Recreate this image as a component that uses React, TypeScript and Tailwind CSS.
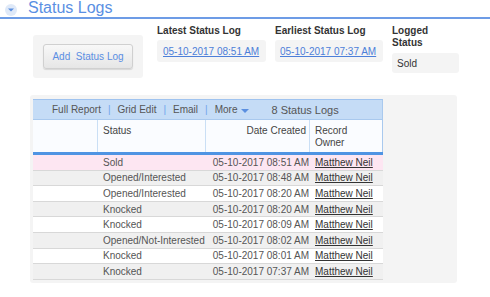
import React from "react";

const rows = [
  { status: "Sold", date: "05-10-2017 08:51 AM", bg: "bg-[#fde6f2]" },
  { status: "Opened/Interested", date: "05-10-2017 08:48 AM", bg: "bg-[#f0f0f0]" },
  { status: "Opened/Interested", date: "05-10-2017 08:20 AM", bg: "bg-white" },
  { status: "Knocked", date: "05-10-2017 08:20 AM", bg: "bg-[#f0f0f0]" },
  { status: "Knocked", date: "05-10-2017 08:09 AM", bg: "bg-white" },
  { status: "Opened/Not-Interested", date: "05-10-2017 08:02 AM", bg: "bg-[#f0f0f0]" },
  { status: "Knocked", date: "05-10-2017 08:01 AM", bg: "bg-white" },
  { status: "Knocked", date: "05-10-2017 07:37 AM", bg: "bg-[#f0f0f0]" },
];

function Sep() {
  return <span className="mx-[7px] text-[#6fa6ec]">|</span>;
}

export default function App() {
  return (
    <div
      className="w-[490px] h-[297px] bg-white overflow-hidden text-[10px] text-[#444]"
      style={{ fontFamily: '"Liberation Sans", Arial, sans-serif' }}
    >
      {/* Header */}
      <div className="flex items-start h-[19px] border-b-2 border-[#6d9ce6]">
        <div className="ml-[5px] mt-[4px] w-[12px] h-[12px] rounded-full bg-[#dfe9f8] flex items-center justify-center">
          <svg width="6" height="4" viewBox="0 0 6 4">
            <path d="M0 0.5 L6 0.5 L3 3.5 Z" fill="#5b8fe0" />
          </svg>
        </div>
        <div className="ml-[11px] mt-[0px] text-[16px] leading-[16px] text-[#5a8fe3] whitespace-nowrap">
          Status Logs
        </div>
      </div>

      {/* Info row */}
      <div className="flex items-start pl-[33px] h-[59px]">
        <div className="mt-[16px] w-[110px] h-[43px] bg-[#f4f4f4] rounded-[3px] flex items-center justify-center">
          <div className="w-[90px] h-[25px] rounded-[3px] border border-[#d0d0d0] bg-gradient-to-b from-[#f8f8f8] to-[#e6e6e6] shadow-[0_1px_1px_rgba(0,0,0,0.12)] flex items-center justify-center text-[#5b8ee3] text-[10px] whitespace-pre">
            Add  Status Log
          </div>
        </div>

        <div className="ml-[14px] mt-[5.5px] w-[109px]">
          <div className="font-bold text-[#333] leading-[12px] whitespace-nowrap">Latest Status Log</div>
          <div className="mt-[3.5px] h-[22px] bg-[#f4f4f4] rounded-[3px] flex items-center pl-[6px]">
            <span className="underline text-[#4d7fd9] whitespace-nowrap">05-10-2017 08:51 AM</span>
          </div>
        </div>

        <div className="ml-[9px] mt-[5.5px] w-[108px]">
          <div className="font-bold text-[#333] leading-[12px] whitespace-nowrap">Earliest Status Log</div>
          <div className="mt-[3.5px] h-[22px] bg-[#f4f4f4] rounded-[3px] flex items-center pl-[5px]">
            <span className="underline text-[#4d7fd9] whitespace-nowrap">05-10-2017 07:37 AM</span>
          </div>
        </div>

        <div className="ml-[9px] mt-[5.5px] w-[67px]">
          <div className="font-bold text-[#333] leading-[12px]">
            Logged
            <br />
            Status
          </div>
          <div className="mt-[4.5px] h-[20px] bg-[#f4f4f4] rounded-[3px] flex items-center pl-[5px] text-[#333]">
            Sold
          </div>
        </div>
      </div>

      {/* Table panel */}
      <div className="ml-[30px] mt-[17px] w-[427px] h-[188px] bg-[#f4f4f4] rounded-[3px] pt-[4px] pl-[3px]">
        <div className="w-[350px]">
          {/* toolbar */}
          <div className="h-[20px] bg-[#c5dcf6] border-t border-[#9fc3ef] border-r border-r-[#a9c9ee] flex items-center pl-[19px] text-[#555] leading-[12px] whitespace-nowrap">
            <span>Full Report</span>
            <Sep />
            <span>Grid Edit</span>
            <Sep />
            <span>Email</span>
            <Sep />
            <span>More</span>
            <svg className="ml-[4px] mt-[2px]" width="8" height="4" viewBox="0 0 8 4">
              <path d="M0 0 L8 0 L4 4 Z" fill="#5b8fe0" />
            </svg>
            <span className="ml-[22px] text-[11px]">8 Status Logs</span>
          </div>
          {/* header */}
          <div className="flex h-[36px] bg-[#fafcff] border-t border-[#a9c9ee] border-b-[3px] border-b-[#4f94e3] text-[#444] leading-[11.5px]">
            <div className="w-[65px] border-r border-[#cadff5]" />
            <div className="w-[108px] border-r border-[#cadff5] pl-[5px] pt-[5px]">Status</div>
            <div className="w-[104px] border-r border-[#cadff5] pr-[3px] pt-[5px] text-right">Date Created</div>
            <div className="w-[73px] border-r border-[#a9c9ee] pl-[5px] pt-[5px]">
              Record
              <br />
              Owner
            </div>
          </div>
          {/* rows */}
          {rows.map((r, i) => (
            <div
              key={i}
              className={`flex h-[15.6px] items-center border-b border-[#d8d8d8] text-[#555] ${r.bg}`}
            >
              <div className="w-[65px]" />
              <div className="w-[108px] pl-[5px] whitespace-nowrap">{r.status}</div>
              <div className="w-[104px] text-right pr-[1px] whitespace-nowrap">{r.date}</div>
              <div className="w-[73px] pl-[5px] whitespace-nowrap">
                <span className="underline text-[#333]">Matthew Neil</span>
              </div>
            </div>
          ))}
        </div>
      </div>
    </div>
  );
}
